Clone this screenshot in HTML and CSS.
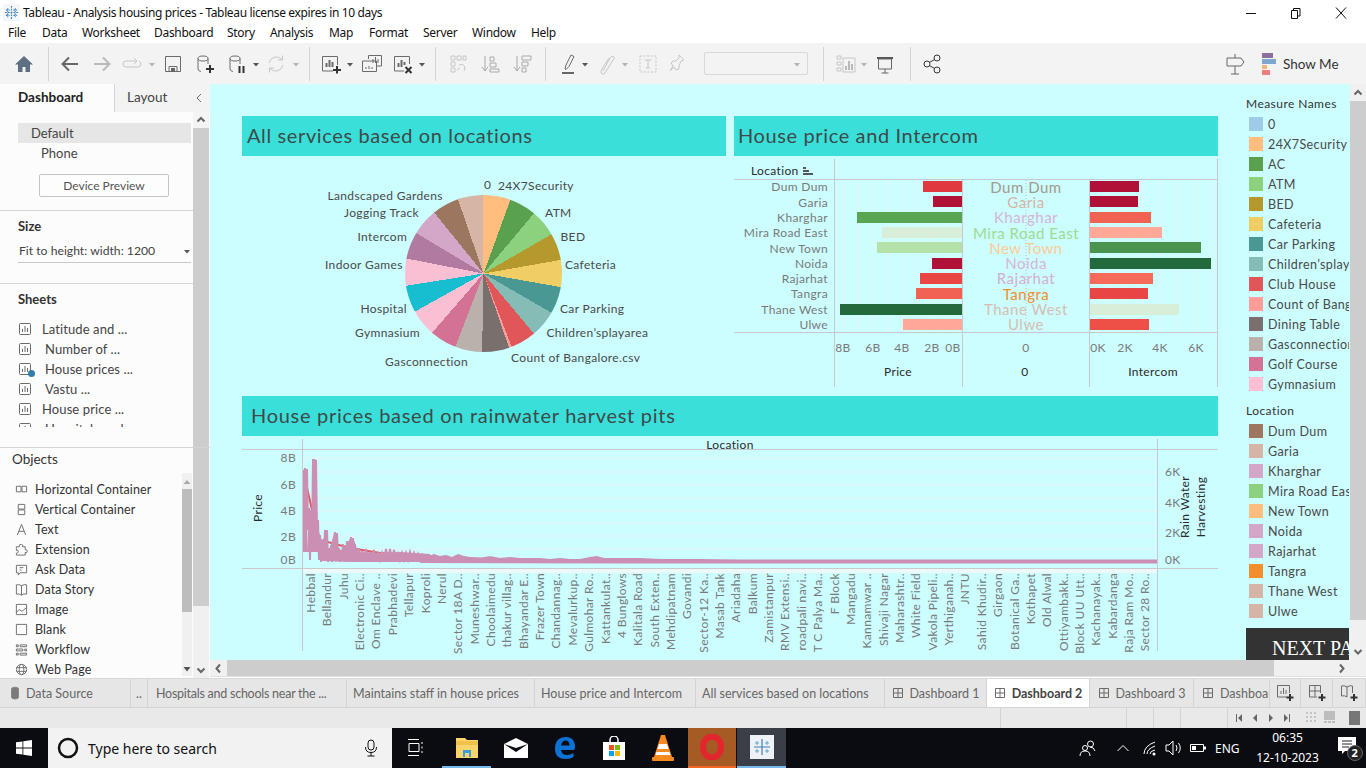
FILE: index.html
```html
<!DOCTYPE html>
<html lang="en">
<head>
<meta charset="utf-8">
<title>Tableau - Analysis housing prices</title>
<link rel="stylesheet" href="styles.css">
</head>
<body>
<svg class="defs" width="0" height="0" aria-hidden="true">
  <symbol id="sheet" viewBox="0 0 14 14"><rect x="1.5" y="1.5" width="11" height="11" rx="1" class="ln g6"/><path d="M4.5 10V7M7 10V4M9.5 10V6" class="ln g6"/></symbol>
  <symbol id="dash" viewBox="0 0 12 12"><path d="M1.5 1.5h9v9h-9zM6 1.5v9M1.5 6h9" class="ln g6"/></symbol>
  <symbol id="caret" viewBox="0 0 8 8"><path d="M1 3h6L4 6.5z" class="fl"/></symbol>
</svg>

<header class="titlebar">
  <svg class="logo" viewBox="0 0 18 18"><rect width="18" height="18" fill="#f4f7fa"/><path d="M9 2v14M2 9h14M5 4.5v4M3 6.500h4M13 4.500v4M11 6.500h4M5 10v4M3 12h4M13 10v4M11 12h4" class="logo-l"/></svg>
  <span class="title">Tableau - Analysis housing prices - Tableau license expires in 10 days</span>
  <div class="winctl">
    <svg width="12" height="12" viewBox="0 0 12 12"><path d="M1 6.500h10" class="ln k"/></svg>
    <svg width="12" height="12" viewBox="0 0 12 12"><path d="M1.500 3.500h6v8h-6zM3.500 3.500v-2h6.500v7.500h-2.500" class="ln k"/></svg>
    <svg width="12" height="12" viewBox="0 0 12 12"><path d="M1 .5l10 11M11 .5l-10 11" class="ln k"/></svg>
  </div>
</header>

<nav class="menubar">
  <span>File</span><span>Data</span><span>Worksheet</span><span>Dashboard</span><span>Story</span><span>Analysis</span><span>Map</span><span>Format</span><span>Server</span><span>Window</span><span>Help</span>
</nav>

<div class="toolbar">
  <svg class="ti m12" viewBox="0 0 24 24"><path d="M12 4L3 12.500h3V20h4.500v-5h3v5H18v-7.500h3z" fill="#5d6f80"/></svg>
  <i class="sep m12"></i>
  <svg class="ti m9" viewBox="0 0 24 24"><path d="M20 12H5M11 5.500L4.500 12l6.500 6.500" class="ln2 g5"/></svg>
  <svg class="ti m8" viewBox="0 0 24 24"><path d="M4 12h15M13 5.500l6.500 6.500-6.500 6.500" class="ln2 gb"/></svg>
  <svg class="ti m6" viewBox="0 0 24 24"><path d="M16 9H6a3 3 0 0 0 0 6h12a3 3 0 0 0 1-5.800M14 6l3 3-3 3" class="ln gc"/></svg>
  <svg class="tc m4 off" viewBox="0 0 8 8"><use href="#caret"/></svg>
  <svg class="ti m5" viewBox="0 0 24 24"><path d="M4.500 4.500h15v15h-15zM8 19.500v-5h8v5" class="ln g6"/><rect x="10" y="16" width="4" height="3.500" fill="#666"/></svg>
  <svg class="ti m8" viewBox="0 0 24 24"><ellipse cx="10" cy="6.500" rx="5" ry="2.500" class="ln g6"/><path d="M5 6.500V17q0 2 3 2.500M15 6.500V12" class="ln g6"/><path d="M17 13v8M13 17h8" class="ln2 k3"/></svg>
  <svg class="ti m8" viewBox="0 0 24 24"><ellipse cx="10" cy="6.500" rx="5" ry="2.500" class="ln g6"/><path d="M5 6.500V17q0 2 3 2.500M15 6.500V12" class="ln g6"/><path d="M14.500 14v7M18.500 14v7" class="ln2 k3"/></svg>
  <svg class="tc m3" viewBox="0 0 8 8"><use href="#caret"/></svg>
  <svg class="ti m4" viewBox="0 0 24 24"><path d="M5 11a7.500 7.500 0 0 1 13-3.500M19 13a7.500 7.500 0 0 1-13 3.500M18.500 3.500v4.500h-4.500M5.500 20.500V16h4.500" class="ln gc"/></svg>
  <svg class="tc m4 off" viewBox="0 0 8 8"><use href="#caret"/></svg>
  <i class="sep m9"></i>
  <svg class="ti m9" viewBox="0 0 24 24"><path d="M14 19H3.500V4.500h15V13" class="ln g6"/><path d="M7.500 15v-4M10.500 15V8M13.500 15v-5" class="ln2 g6"/><path d="M18 14v7.500M14 18h8" class="ln2 k3"/></svg>
  <svg class="tc m3" viewBox="0 0 8 8"><use href="#caret"/></svg>
  <svg class="ti m6" viewBox="0 0 24 24"><path d="M8.500 7V3.500h13V14H17M2.500 9h14v10.500h-14z" class="ln g6"/><path d="M13 11V7M15.500 11V5M18 11V7M6 17v-2M9 17v-3M12 17v-2" class="ln g6"/></svg>
  <svg class="ti m7" viewBox="0 0 24 24"><path d="M13 19H3.500V4.500h15V12" class="ln g6"/><path d="M7.500 15v-4M10.500 15V8M13.500 13v-3" class="ln2 g6"/><path d="M14.500 15l6 6M20.500 15l-6 6" class="ln2 k3"/></svg>
  <svg class="tc m3" viewBox="0 0 8 8"><use href="#caret"/></svg>
  <i class="sep m9"></i>
  <svg class="ti m10" viewBox="0 0 24 24"><path d="M5 4h4v4H5zM11 4h4v4h-4zM17 4h3v4h-3zM5 10h4v4H5zM5 16h4v4H5zM13 13q5-2 6 3l-1 3M11 18l3-2" class="ln gc"/></svg>
  <svg class="ti m8" viewBox="0 0 24 24"><path d="M7 4v15M4 15l3 4 3-4" class="ln g9"/><path d="M12 5h4v4h-4zM12 11h6v4h-6zM12 17h9v3h-9z" class="ln g9"/></svg>
  <svg class="ti m8" viewBox="0 0 24 24"><path d="M7 4v15M4 15l3 4 3-4" class="ln g9"/><path d="M12 4h9v4h-9zM12 10h6v4h-6zM12 16h4v4h-4z" class="ln g9"/></svg>
  <i class="sep m11"></i>
  <svg class="ti m10" viewBox="0 0 24 24"><path d="M9 17l1-4 5-10 3 1.500-5 10-3 3z" class="ln g6"/><path d="M6 21h12" class="ln2 g5"/></svg>
  <svg class="tc m1" viewBox="0 0 8 8"><use href="#caret"/></svg>
  <svg class="ti m5" viewBox="0 0 24 24"><path d="M9 19l7-13q2-3 3.500-1.500T19 8l-8 13q-2 2-3.500.5T8 17l7-11" class="ln gc"/></svg>
  <svg class="tc m3 off" viewBox="0 0 8 8"><use href="#caret"/></svg>
  <svg class="ti m7" viewBox="0 0 24 24"><rect x="4" y="4" width="16" height="16" class="ln gc dashed"/><path d="M8.500 8h7M12 8v8M10 16h4" class="ln gc"/></svg>
  <svg class="ti m5" viewBox="0 0 24 24"><path d="M14 3l5 5-3 1-2 5 0 3-3 1-2-3-4 4 3-5-2-3 2-2 3 0 3-3z" class="ln gc"/></svg>
  <div class="combo m15"><svg class="tc" viewBox="0 0 8 8"><use href="#caret" class="off"/></svg></div>
  <i class="sep m15"></i>
  <svg class="ti m10" viewBox="0 0 24 24"><path d="M9 6h12v14H9zM3 4h4v3H3zM3 10h4v3H3zM3 16h4v3H3z" class="ln gc"/><path d="M12 18v-4M15 18V9M18 18v-6" class="ln2 gb"/></svg>
  <svg class="tc m2 off" viewBox="0 0 8 8"><use href="#caret"/></svg>
  <svg class="ti m5" viewBox="0 0 24 24"><path d="M4 5h16v2H4z" fill="#555"/><path d="M5.500 7h13v10h-13zM12 17v4M8.500 21h7" class="ln g5"/></svg>
  <i class="sep m13"></i>
  <svg class="ti m9" viewBox="0 0 24 24"><circle cx="7" cy="12" r="3" class="ln k3"/><circle cx="17" cy="6" r="3" class="ln k3"/><circle cx="17" cy="18" r="3" class="ln k3"/><path d="M9.500 10.500l5-3M9.500 13.500l5 3" class="ln k3"/></svg>
  <svg class="ti signpost" viewBox="0 0 24 24"><path d="M4 6h14l3 4-3 4H4zM12 2v4M12 14v8M8 22h8" class="ln g5"/></svg>
  <div class="showme">
    <svg width="14" height="22" viewBox="0 0 14 22"><rect x="0" y="0" width="11" height="5" fill="#8a6f9e"/><rect x="0" y="6" width="14" height="5" fill="#7fa6cf"/><rect x="0" y="12" width="5" height="4" fill="#f3b37e"/><rect x="0" y="17" width="8" height="5" fill="#ee7d80"/></svg>
    <span>Show Me</span>
  </div>
</div>

<main class="workspace">
  <aside class="side">
    <div class="sidetabs"><span class="stab on">Dashboard</span><span class="stab">Layout</span>
      <svg class="collapse" width="8" height="10" viewBox="0 0 8 10"><path d="M6 1L2 5l4 4" class="ln g6"/></svg>
    </div>
    <div class="sidebody">
      <div class="sidecol">
        <section class="sec devices">
          <div class="dev on">Default</div>
          <div class="dev phone">Phone</div>
          <div class="btn">Device Preview</div>
        </section>
        <section class="sec size">
          <h3>Size</h3>
          <div class="select"><span>Fit to height: width: 1200</span><svg class="tc" viewBox="0 0 8 8"><use href="#caret"/></svg></div>
        </section>
        <section class="sec sheets">
          <h3>Sheets</h3>
          <ul class="sheetlist">
            <li><svg width="14" height="14"><use href="#sheet"/></svg><span>Latitude and ...</span></li>
            <li class="ind"><svg width="14" height="14"><use href="#sheet"/></svg><span>Number of ...</span></li>
            <li class="ind"><svg width="14" height="14"><use href="#sheet"/></svg><b class="tick"></b><span>House prices ...</span></li>
            <li class="ind"><svg width="14" height="14"><use href="#sheet"/></svg><span>Vastu ...</span></li>
            <li><svg width="14" height="14"><use href="#sheet"/></svg><span>House price ...</span></li>
            <li class="ind"><svg width="14" height="14"><use href="#sheet"/></svg><span>Hospitals and ...</span></li>
          </ul>
        </section>
      </div>
      <div class="vscroll small"><svg width="16" height="16" viewBox="0 0 16 16"><path d="M4.500 9.500L8 6l3.500 3.500" class="ln2 g5"/></svg><div class="thumb"></div></div>
    </div>
    <section class="objects">
      <h3>Objects</h3>
      <div class="objwrap">
        <ul class="objlist">
          <li><svg viewBox="0 0 14 14"><path d="M1.500 3.500h5v6h-5zM7.500 3.500h5v6h-5z" class="ln g6"/></svg>Horizontal Container</li>
          <li><svg viewBox="0 0 14 14"><path d="M3.500 1.500h7v5h-7zM3.500 7.500h7v5h-7z" class="ln g6"/></svg>Vertical Container</li>
          <li><svg viewBox="0 0 14 14"><path d="M2.500 13L7 1.500 11.500 13M4 9h6" class="ln g6"/></svg>Text</li>
          <li><svg viewBox="0 0 14 14"><path d="M1.500 6V4h3q0-3 2.500-2.500T8 4h3v3q3 0 2 2.500t-2 .5v3H1.500v-2q2 0 2-2t-2-1z" class="ln g6"/></svg>Extension</li>
          <li><svg viewBox="0 0 14 14"><path d="M1.500 2.500h11v8h-7l-2 2.500v-2.500h-2zM5 5h4M5 7.500h2" class="ln g6"/></svg>Ask Data</li>
          <li><svg viewBox="0 0 14 14"><path d="M7 3Q4 1 1.500 2v10q3-1 5.500 1 2.500-2 5.500-1V2Q10 1 7 3zM7 3v10" class="ln g6"/></svg>Data Story</li>
          <li><svg viewBox="0 0 14 14"><path d="M1.500 1.500h11v11h-11zM1.500 10l3-3 3 2 5-4" class="ln g6"/></svg>Image</li>
          <li><svg viewBox="0 0 14 14"><path d="M1.500 1.500h11v11h-11z" class="ln g6"/></svg>Blank</li>
          <li><svg viewBox="0 0 14 14"><path d="M1.500 2h2v2h-2zM5.500 2h7v2h-7zM1.500 6.500h7v2h-7zM10.500 6.500h2v2h-2zM1.500 11h2v2h-2zM5.500 11h7v2h-7z" class="ln g6"/></svg>Workflow</li>
          <li><svg viewBox="0 0 14 14"><circle cx="7" cy="7" r="5.500" class="ln g6"/><ellipse cx="7" cy="7" rx="2.500" ry="5.500" class="ln g6"/><path d="M1.500 5h11M1.500 9h11" class="ln g6"/></svg>Web Page</li>
        </ul>
        <div class="vscroll tiny"><svg width="10" height="16" viewBox="0 0 10 16"><path d="M1.500 11l3.500-4 3.500 4z" fill="#aaa"/></svg><div class="thumb"></div><svg class="down" width="10" height="12" viewBox="0 0 10 12"><path d="M1.500 3h7L5 7.500z" fill="#555"/></svg></div>
      </div>
      <svg class="objdown" width="16" height="16" viewBox="0 0 16 16"><path d="M4.500 6.500L8 10l3.500-3.500" class="ln2 g5"/></svg>
    </section>
  </aside>

  <div class="viewport">
    <div class="canvasrow">
      <div class="canvas">
        <div class="dashboard">
          <div class="toprow">
            <section class="panel">
              <h2 class="band">All services based on locations</h2>
              <div class="chart">
                <div class="pie"></div>
                <svg class="overlay" width="484" height="240" viewBox="242 156 484 240">
                  <text x="484" y="189" class="t12 d">0</text>
                  <text x="498" y="190" class="t12 d">24X7Security</text>
                  <text x="327.500" y="200" class="t12 d">Landscaped Gardens</text>
                  <text x="344" y="217" class="t12 d">Jogging Track</text>
                  <text x="545" y="217" class="t12 d">ATM</text>
                  <text x="560.500" y="241" class="t12 d">BED</text>
                  <text x="357.500" y="241" class="t12 d">Intercom</text>
                  <text x="325" y="269" class="t12 d">Indoor Games</text>
                  <text x="565" y="269" class="t12 d">Cafeteria</text>
                  <text x="560" y="313" class="t12 d">Car Parking</text>
                  <text x="360.500" y="313" class="t12 d">Hospital</text>
                  <text x="355" y="337" class="t12 d">Gymnasium</text>
                  <text x="546.500" y="337" class="t12 d">Children’splayarea</text>
                  <text x="511" y="362" class="t12 d">Count of Bangalore.csv</text>
                  <text x="385" y="366" class="t12 d">Gasconnection</text>
                </svg>
              </div>
            </section>
            <section class="panel">
              <h2 class="band second-band">House price and Intercom</h2>
              <div class="chart">
                <svg class="overlay" width="484" height="240" viewBox="734 156 484 240">
                  <path d="M844 180v152M858.700 180v152M873.300 180v152M888 180v152M902.700 180v152M917.300 180v152M932 180v152M946.700 180v152M1107 180v152M1124.700 180v152M1142.400 180v152M1160 180v152M1178 180v152M1196 180v152M1213 180v152" class="grid"/>
                  <path d="M1026 180v152" class="dots"/>
                  <rect x="923" y="181" width="39" height="11" class="b1"/><rect x="933" y="196" width="29" height="11" class="b2"/><rect x="857" y="212" width="105" height="11" class="b3"/><rect x="882" y="227" width="80" height="11" class="b4"/><rect x="877" y="242" width="85" height="11" class="b5"/><rect x="932" y="258" width="30" height="11" class="b2"/><rect x="920" y="273" width="42" height="11" class="b7"/><rect x="916" y="288" width="46" height="11" class="b8"/><rect x="840" y="304" width="122" height="11" class="b9"/><rect x="903" y="319" width="59" height="11" class="b10"/>
                  <rect x="1090" y="181" width="49" height="11" class="b2"/><rect x="1090" y="196" width="48" height="11" class="b2"/><rect x="1090" y="212" width="61" height="11" class="b8"/><rect x="1090" y="227" width="72" height="11" class="b10"/><rect x="1090" y="242" width="111" height="11" class="b11"/><rect x="1090" y="258" width="121" height="11" class="b9"/><rect x="1090" y="273" width="63" height="11" class="b12"/><rect x="1090" y="288" width="58" height="11" class="b7"/><rect x="1090" y="304" width="89" height="11" class="b4"/><rect x="1090" y="319" width="59" height="11" class="b13"/>
                  <path d="M834.500 159v228M962.500 180v207M1089.500 180v207M1217.500 159v228M734 179.500h484M734 332.500h484" class="axis"/>
                  <text x="751" y="175" class="t12 k2">Location</text>
                  <path d="M803 167h3v2h-3zM803 170h6v2h-6zM803 173h10v2h-10z" class="fl"/>
                  <g class="t12 g7 end">
                    <text x="828" y="191">Dum Dum</text><text x="828" y="207">Garia</text><text x="828" y="222">Kharghar</text><text x="828" y="237">Mira Road East</text><text x="828" y="253">New Town</text><text x="828" y="268">Noida</text><text x="828" y="283">Rajarhat</text><text x="828" y="298">Tangra</text><text x="828" y="314">Thane West</text><text x="828" y="329">Ulwe</text>
                  </g>
                  <g class="t15 mid">
                    <text x="1026" y="193" class="n1">Dum Dum</text><text x="1026" y="208" class="n2">Garia</text><text x="1026" y="223" class="n3">Kharghar</text><text x="1026" y="239" class="n4">Mira Road East</text><text x="1026" y="254" class="n5">New Town</text><text x="1026" y="269" class="n3">Noida</text><text x="1026" y="284" class="n6">Rajarhat</text><text x="1026" y="300" class="n7">Tangra</text><text x="1026" y="315" class="n8">Thane West</text><text x="1026" y="330" class="n8">Ulwe</text>
                  </g>
                  <g class="t12 g7 mid">
                    <text x="843" y="352">8B</text><text x="873" y="352">6B</text><text x="902" y="352">4B</text><text x="932" y="352">2B</text><text x="953" y="352">0B</text><text x="1026" y="352">0</text><text x="1098" y="352">0K</text><text x="1125" y="352">2K</text><text x="1160" y="352">4K</text><text x="1196" y="352">6K</text>
                  </g>
                  <g class="t12 k2 mid">
                    <text x="898" y="376">Price</text><text x="1025" y="376">0</text><text x="1153" y="376">Intercom</text>
                  </g>
                </svg>
              </div>
            </section>
          </div>
          <section class="panel wide">
            <h2 class="band">House prices based on rainwater harvest pits</h2>
            <div class="chart low">
              <svg class="overlay" width="976" height="224" viewBox="242 436 976 224">
                <rect x="302" y="569" width="855" height="4" class="strip"/>
                <path d="M303 458h854M303 472h854M303 485h854M303 498h854M303 511h854M303 523h854M303 536h854M303 549h854" class="grid"/>
                <path d="M303 470L312 510 320 540 350 548 380 553 450 558 573 560.500 720 561.500" class="trend"/>
                <path d="M303 552L303 480 306 470 307.500 550 309 505 311 550 313 459 315.500 459 317 520 319 545 326 535 328 556 334 533 337 534 339 552 346 545 351 537 354 540 358 552 380 553 400 552 430 554 430 562 350 562 322 561 318 552 303 552z" class="band-area"/>
                <path d="M303.500 552V470L304.500 545 305 468 306 552 307 469 308 530 309 508 310 560 311 510 312 548 313 459 313.500 545 314 459 315 545 316 460 317 530 318 520 319 560 320 535 321 562 322 540 323 560 324 555 325 530 326 560 327 530 328 562 329 548 330 558 331 545 332 562 333 548 334 561 335 532 336 560 337 533 338 561 339 548 340 562 341 550 342 560 343 544 344 561 345 548 346 562 347 541 348 561 349 546 350 561 351 537 352 560 353 538 354 561 355 544 356 561 357 549 358 562 359 548 360 561 362 551 364 561 366 549 368 561 370 552 372 561 374 550 376 561 378 552 380 560 382 553 384 560 386 549 388 560 390 549 392 560 394 550 396 560 398 552 400 560 402 553 404 560 406 553 408 560 410 552 412 559 414 553 416 559 418 554 420 560" class="zig"/>
                <path d="M420 560L422 553 428 556 434 554 440 556 446 555 452 557 458 554 464 556 470 557 480 558 490 556 500 558 510 557 520 558 530 558 540 558 550 559 560 558 570 559 580 559 590 557 597 556 604 558 640 558 660 559 700 559 740 559.500 1157 559.500V563.500H640L420 563z" class="band-area"/>
                <path d="M302.500 439v212M1157.500 439v212M242 449.500h976M242 568.500h976" class="axis"/>
                <text x="730" y="449" class="t12 k2 mid">Location</text>
                <g class="t12 g7 end">
                  <text x="296" y="462">8B</text><text x="296" y="489">6B</text><text x="296" y="515">4B</text><text x="296" y="541">2B</text><text x="296" y="564">0B</text>
                </g>
                <g class="t12 g7">
                  <text x="1165" y="476">6K</text><text x="1165" y="507">4K</text><text x="1165" y="537">2K</text><text x="1165" y="564">0K</text>
                </g>
                <g class="t12 k2 mid">
                  <text transform="translate(262 508) rotate(-90)">Price</text>
                  <text transform="translate(1189 507) rotate(-90)">Rain Water</text>
                  <text transform="translate(1205 507) rotate(-90)">Harvesting</text>
                </g>
                <g class="t12 g7 end">
                  <text transform="translate(315 573) rotate(-90)">Hebbal</text>
                  <text transform="translate(331.400 573) rotate(-90)">Bellandur</text>
                  <text transform="translate(347.700 573) rotate(-90)">Juhu</text>
                  <text transform="translate(364.100 573) rotate(-90)">Electronic Ci..</text>
                  <text transform="translate(380.400 573) rotate(-90)">Om Enclave ..</text>
                  <text transform="translate(396.800 573) rotate(-90)">Prabhadevi</text>
                  <text transform="translate(413.200 573) rotate(-90)">Tellapur</text>
                  <text transform="translate(429.500 573) rotate(-90)">Koproli</text>
                  <text transform="translate(445.900 573) rotate(-90)">Nerul</text>
                  <text transform="translate(462.200 573) rotate(-90)">Sector 18A D..</text>
                  <text transform="translate(478.600 573) rotate(-90)">Muneshwar..</text>
                  <text transform="translate(495 573) rotate(-90)">Choolaimedu</text>
                  <text transform="translate(511.300 573) rotate(-90)">thakur villag..</text>
                  <text transform="translate(527.700 573) rotate(-90)">Bhayandar E..</text>
                  <text transform="translate(544 573) rotate(-90)">Frazer Town</text>
                  <text transform="translate(560.400 573) rotate(-90)">Chandannag..</text>
                  <text transform="translate(576.800 573) rotate(-90)">Mevalurkup..</text>
                  <text transform="translate(593.100 573) rotate(-90)">Gulmohar Ro..</text>
                  <text transform="translate(609.500 573) rotate(-90)">Kattankulat..</text>
                  <text transform="translate(625.800 573) rotate(-90)">4 Bunglows</text>
                  <text transform="translate(642.200 573) rotate(-90)">Kalitala Road</text>
                  <text transform="translate(658.600 573) rotate(-90)">South Exten..</text>
                  <text transform="translate(674.900 573) rotate(-90)">Mehdipatnam</text>
                  <text transform="translate(691.300 573) rotate(-90)">Govandi</text>
                  <text transform="translate(707.600 573) rotate(-90)">Sector-12 Ka..</text>
                  <text transform="translate(724 573) rotate(-90)">Masab Tank</text>
                  <text transform="translate(740.400 573) rotate(-90)">Ariadaha</text>
                  <text transform="translate(756.700 573) rotate(-90)">Balkum</text>
                  <text transform="translate(773.100 573) rotate(-90)">Zamistanpur</text>
                  <text transform="translate(789.400 573) rotate(-90)">RMV Extensi..</text>
                  <text transform="translate(805.800 573) rotate(-90)">roadpali navi..</text>
                  <text transform="translate(822.200 573) rotate(-90)">T C Palya Ma..</text>
                  <text transform="translate(838.500 573) rotate(-90)">F Block</text>
                  <text transform="translate(854.900 573) rotate(-90)">Mangadu</text>
                  <text transform="translate(871.200 573) rotate(-90)">Kannamwar ..</text>
                  <text transform="translate(887.600 573) rotate(-90)">Shivaji Nagar</text>
                  <text transform="translate(904 573) rotate(-90)">Maharashtr..</text>
                  <text transform="translate(920.300 573) rotate(-90)">White Field</text>
                  <text transform="translate(936.700 573) rotate(-90)">Vakola Pipeli..</text>
                  <text transform="translate(953 573) rotate(-90)">Yerthiganah..</text>
                  <text transform="translate(969.400 573) rotate(-90)">JNTU</text>
                  <text transform="translate(985.800 573) rotate(-90)">Sahid Khudir..</text>
                  <text transform="translate(1002.100 573) rotate(-90)">Girgaon</text>
                  <text transform="translate(1018.500 573) rotate(-90)">Botanical Ga..</text>
                  <text transform="translate(1034.800 573) rotate(-90)">Kothapet</text>
                  <text transform="translate(1051.200 573) rotate(-90)">Old Alwal</text>
                  <text transform="translate(1067.600 573) rotate(-90)">Ottiyambakk..</text>
                  <text transform="translate(1083.900 573) rotate(-90)">Block UU Utt..</text>
                  <text transform="translate(1100.300 573) rotate(-90)">Kachanayak..</text>
                  <text transform="translate(1116.600 573) rotate(-90)">Kabardanga</text>
                  <text transform="translate(1133 573) rotate(-90)">Raja Ram Mo..</text>
                  <text transform="translate(1149.400 573) rotate(-90)">Sector 28 Ro..</text>
                </g>
              </svg>
            </div>
          </section>
        </div>
        <aside class="legends">
          <h4>Measure Names</h4>
          <ul class="legend">
            <li><i class="c-0"></i>0</li><li><i class="c-1"></i>24X7Security</li><li><i class="c-2"></i>AC</li><li><i class="c-3"></i>ATM</li><li><i class="c-4"></i>BED</li><li><i class="c-5"></i>Cafeteria</li><li><i class="c-6"></i>Car Parking</li><li><i class="c-7"></i>Children’splayarea</li><li><i class="c-8"></i>Club House</li><li><i class="c-9"></i>Count of Bangalore.csv</li><li><i class="c-10"></i>Dining Table</li><li><i class="c-11"></i>Gasconnection</li><li><i class="c-12"></i>Golf Course</li><li><i class="c-13"></i>Gymnasium</li>
          </ul>
          <h4 class="second">Location</h4>
          <ul class="legend">
            <li><i class="c-17"></i>Dum Dum</li><li><i class="c-18"></i>Garia</li><li><i class="c-16"></i>Kharghar</li><li><i class="c-3"></i>Mira Road East</li><li><i class="c-1"></i>New Town</li><li><i class="c-16"></i>Noida</li><li><i class="c-16"></i>Rajarhat</li><li><i class="c-19"></i>Tangra</li><li><i class="c-18"></i>Thane West</li><li><i class="c-18"></i>Ulwe</li>
          </ul>
          <div class="nextpage">NEXT PAGE</div>
        </aside>
      </div>
      <div class="vscroll main">
        <svg width="16" height="17" viewBox="0 0 16 17"><path d="M4.500 10.500L8 7l3.500 3.500" class="ln2 g5"/></svg>
        <div class="thumb"></div>
        <svg class="down" width="16" height="17" viewBox="0 0 16 17"><path d="M4.500 7L8 10.500 11.500 7" class="ln2 g5"/></svg>
      </div>
    </div>
    <div class="hscroll">
      <svg width="17" height="17" viewBox="0 0 17 17"><path d="M10 4.500L6.500 8.500 10 12.500" class="ln2 g5"/></svg>
      <div class="hthumb"></div>
      <svg class="right" width="17" height="17" viewBox="0 0 17 17"><path d="M7 4.500L10.500 8.500 7 12.500" class="ln2 g5"/></svg>
    </div>
  </div>
</main>

<div class="tabs">
  <div class="tab first"><svg width="10" height="14" viewBox="0 0 10 14"><ellipse cx="5" cy="3" rx="3.500" ry="1.800" class="ln g7"/><path d="M1.500 3v8q0 2 3.500 2t3.500-2V3" class="ln g7"/></svg>Data Source</div>
  <div class="tab">..</div>
  <div class="tab txt narrow">Hospitals and schools near the ...</div>
  <div class="tab txt">Maintains staff in house prices</div>
  <div class="tab txt">House price and Intercom</div>
  <div class="tab txt">All services based on locations</div>
  <div class="tab"><svg width="12" height="12"><use href="#dash"/></svg>Dashboard 1</div>
  <div class="tab active"><svg width="12" height="12"><use href="#dash"/></svg>Dashboard 2</div>
  <div class="tab"><svg width="12" height="12"><use href="#dash"/></svg>Dashboard 3</div>
  <div class="tab clip"><svg width="12" height="12"><use href="#dash"/></svg><span>Dashboard 4</span></div>
  <div class="tab add"><svg width="18" height="18" viewBox="0 0 18 18"><path d="M11 13H1.500V1.500h12V9" class="ln g6"/><path d="M5 10V7M7.500 10V4M10 10V6" class="ln g6"/><path d="M14 10v7M10.500 13.500h7" class="ln2 k3"/></svg></div>
  <div class="tab add"><svg width="18" height="18" viewBox="0 0 18 18"><path d="M9 13H1.500V1.500h11V9M7 1.500v11M1.500 7h11" class="ln g6"/><path d="M14 10v7M10.500 13.500h7" class="ln2 k3"/></svg></div>
  <div class="tab add"><svg width="18" height="18" viewBox="0 0 18 18"><path d="M7 3Q4 1 1.500 2v10q3-1 5.500 1M7 3q3-2 5.500-1v7M7 3v10" class="ln g6"/><path d="M14 10v7M10.500 13.500h7" class="ln2 k3"/></svg></div>
</div>

<div class="statusbar">
  <i class="v v1"></i><i class="v v2"></i><i class="v v3"></i><i class="v v4"></i><i class="v v5"></i>
  <div class="pager">
    <svg width="8" height="10" viewBox="0 0 8 10"><path d="M1 1v8h1V1zM7 1v8L3 5z" class="fl g"/></svg>
    <svg width="8" height="10" viewBox="0 0 8 10"><path d="M6 1v8L2 5z" class="fl g"/></svg>
    <svg width="8" height="10" viewBox="0 0 8 10"><path d="M2 1v8l4-4z" class="fl g"/></svg>
    <svg width="8" height="10" viewBox="0 0 8 10"><path d="M7 1v8H6V1zM1 1v8l4-4z" class="fl g"/></svg>
  </div>
  <div class="views">
    <svg class="vw1" width="12" height="14" viewBox="0 0 12 14"><path d="M1 1h2v2H1zM5 1h2v2H5zM9 1h2v2H9zM1 5h2v2H1zM5 5h2v2H5zM9 5h2v2H9zM1 9h2v2H1zM5 9h2v2H5zM9 9h2v2H9z" fill="#c4c4c4"/></svg>
    <svg class="vw2" width="12" height="14" viewBox="0 0 12 14"><path d="M0 0h11v9H0zM0 10h3v2H0zM4 10h3v2H4zM8 10h3v2H8z" fill="#bdbdbd"/></svg>
    <svg class="vw3" width="11" height="14" viewBox="0 0 11 14"><rect width="11" height="14" fill="#777"/></svg>
  </div>
</div>

<footer class="taskbar">
  <svg class="win" width="16" height="16" viewBox="0 0 16 16"><path d="M0 2.300l6.500-.9v6.200H0zM7.300 1.300L16 0v7.600H7.300zM0 8.400h6.500v6.200L0 13.700zM7.300 8.400H16V16l-8.700-1.200z" fill="#fff"/></svg>
  <div class="search">
    <svg width="24" height="24" viewBox="0 0 24 24"><circle cx="12" cy="12" r="9" fill="none" stroke="#111" stroke-width="2.500"/></svg>
    <span>Type here to search</span>
    <svg class="mic" width="14" height="18" viewBox="0 0 14 18"><rect x="4" y="1" width="6" height="10" rx="3" class="ln k"/><path d="M1.500 8q0 5.500 5.500 5.500T12.500 8M7 13.500V17M3.500 17h7" class="ln k"/></svg>
  </div>
  <svg class="ta tv" width="16" height="18" viewBox="0 0 16 18"><path d="M0 .5h11M1 4.500h10v8H1zM0 16.500h11M14 3v2M14 7.500v2M14 12v2" stroke="#fff" fill="none"/></svg>
  <div class="app on"><svg width="22" height="22" viewBox="0 0 22 22"><path d="M0 2h9l2 2h11v18H0z" fill="#fbd56b"/><path d="M0 5h22v4H0z" fill="#f2c14a"/><path d="M7 21v-7h8v7h-2v-4H9v4z" fill="#3aa0dc"/></svg></div>
  <div class="app"><svg width="24" height="20" viewBox="0 0 24 20"><path d="M0 6L12 0l12 6v14H0z" fill="#fff"/><path d="M0 6l12 8 12-8-12 4z" fill="#0a0d12"/></svg></div>
  <div class="app"><svg width="20" height="22" viewBox="0 0 20 22"><path d="M19 13H6q.5 5 6 5 4 0 6.500-2v4q-3 2-7.500 2Q0 22 0 12 0 0 11 0c6 0 9 4 9 10v1zM14.500 8.500C14.500 5 13 3.500 10.500 3.500 8 3.500 6.500 5.500 6 8.500z" fill="#0c73d6"/></svg></div>
  <div class="app"><svg width="24" height="24" viewBox="0 0 24 24"><path d="M1 6h22v18H1z" fill="#fff"/><path d="M8 7V4a4 4 0 0 1 8 0v3" fill="none" stroke="#fff" stroke-width="1.500"/><rect x="7" y="9" width="5" height="5" fill="#f25022"/><rect x="13" y="9" width="5" height="5" fill="#7fba00"/><rect x="7" y="15" width="5" height="5" fill="#00a4ef"/><rect x="13" y="15" width="5" height="5" fill="#ffb900"/></svg></div>
  <div class="app"><svg width="22" height="26" viewBox="0 0 22 26"><path d="M9 0h4l7 22H2z" fill="#f68a1e"/><path d="M7 9h8l1.500 5h-11zM4.500 17h13l1 3h-15z" fill="#fff"/><rect x="0" y="22" width="22" height="4" rx="1" fill="#f68a1e"/></svg></div>
  <div class="app opera"><svg width="24" height="26" viewBox="0 0 24 26"><ellipse cx="12" cy="13" rx="9" ry="10.500" fill="none" stroke="#e3262e" stroke-width="6"/></svg></div>
  <div class="app tabl"><svg width="24" height="24" viewBox="0 0 24 24"><rect width="24" height="24" fill="#eef2f6"/><path d="M12 4v16M4 12h16" stroke="#3f7fb5" stroke-width="1.200"/><path d="M7 6v4M5 8h4M17 6v4M15 8h4M7 14v4M5 16h4M17 14v4M15 16h4" stroke="#6aa3cc" fill="none"/></svg></div>
  <div class="tray">
    <svg class="pp" width="20" height="20" viewBox="0 0 20 20"><circle cx="12.500" cy="6" r="3" class="ln w"/><circle cx="7" cy="10" r="2.500" class="ln w"/><path d="M2 18q0-5 5-5t5 5M12 9q4 0 5 4" class="ln w"/></svg>
    <svg class="up" width="14" height="10" viewBox="0 0 14 10"><path d="M1.500 8L7 2.500 12.500 8" class="ln w"/></svg>
    <svg class="wifi" width="16" height="16" viewBox="0 0 16 16"><path d="M3 14Q3 6 14 2M6 14q0-5 8-8M9 14q0-3 5-4" class="ln w"/><circle cx="13" cy="14" r="1.500" fill="#fff"/></svg>
    <svg class="vol" width="18" height="16" viewBox="0 0 18 16"><path d="M1 5h3l4-4v14l-4-4H1zM11 5q2 3 0 6M13.500 3q3.500 5 0 10" class="ln w"/></svg>
    <svg class="bat" width="16" height="10" viewBox="0 0 16 10"><path d="M.5 1.500h13v7H.5z" class="ln w"/><rect x="2" y="3" width="4" height="4" fill="#fff"/><rect x="14" y="3.500" width="2" height="3" fill="#fff"/></svg>
    <span class="eng">ENG</span>
    <div class="clock"><span>06:35</span><span>12-10-2023</span></div>
    <div class="notif"><svg width="20" height="18" viewBox="0 0 20 18"><path d="M0 0h18v14H7l-3 3v-3H0z" fill="#fff"/><path d="M4 4h10M4 7h10M4 10h7" stroke="#222"/></svg><b>2</b></div>
  </div>
</footer>
</body>
</html>
```

FILE: styles.css
```css
* { box-sizing: border-box; }
html, body { margin: 0; padding: 0; }
body { width: 1366px; height: 768px; overflow: hidden; background: #fff; font-family: "Lato", "Noto Sans", sans-serif; color: #333; display: flex; flex-direction: column; }
ul { list-style: none; margin: 0; padding: 0; }
h2, h3, h4 { margin: 0; font-weight: 400; }
.defs { position: absolute; }

.ln { fill: none; stroke-width: 1; }
.ln2 { fill: none; stroke-width: 2; }
.k { stroke: #111; } .k3 { stroke: #333; } .w { stroke: #fff; }
.g5 { stroke: #666; } .g6 { stroke: #6b6b6b; } .g7 { stroke: #888; } .g9 { stroke: #a9a9a9; } .gb { stroke: #b9b9b9; } .gc { stroke: #c6c6c6; }
.dashed { stroke-dasharray: 2 1.500; }
.fl { fill: #555; }
.fl.g { fill: #666; }
.off { opacity: .4; }
text.g7, g.g7 { stroke: none; }

.titlebar { height: 25px; display: flex; align-items: center; padding-left: 3px; flex: none; }
.logo { width: 17px; height: 17px; }
.logo-l { stroke: #3f83b5; fill: none; stroke-width: 1.200; stroke-dasharray: 2 1; }
.title { margin-left: 3px; font: 12px/16px "Noto Sans", sans-serif; letter-spacing: -.36px; color: #111; }
.winctl { margin-left: auto; display: flex; gap: 33px; padding-right: 19px; }

.menubar { height: 18px; flex: none; display: grid; grid-template-columns: 34px 40px 72px 73px 43px 59px 40px 54px 49px 59px auto; padding-left: 8px; font: 12px/16px "Noto Sans", sans-serif; letter-spacing: -.3px; color: #111; }

.toolbar { height: 41px; flex: none; display: flex; align-items: center; background: #f3f3f3; }
.ti { width: 24px; height: 24px; flex: none; }
.tc { width: 8px; height: 8px; flex: none; }
.sep { width: 1px; height: 34px; background: #d4d4d4; flex: none; }
.m1 { margin-left: 1px; } .m2 { margin-left: 2px; } .m3 { margin-left: 3px; } .m4 { margin-left: 4px; } .m5 { margin-left: 5px; } .m6 { margin-left: 6px; } .m7 { margin-left: 7px; } .m8 { margin-left: 8px; } .m9 { margin-left: 9px; } .m10 { margin-left: 10px; } .m11 { margin-left: 11px; } .m12 { margin-left: 12px; } .m13 { margin-left: 13px; } .m15 { margin-left: 15px; }
.combo { width: 104px; height: 23px; border: 1px solid #d8d8d8; border-radius: 2px; display: flex; align-items: center; justify-content: flex-end; padding-right: 6px; }
.signpost { margin-left: 279px; }
.showme { margin-left: 15px; display: flex; align-items: center; gap: 7px; font-size: 13.500px; color: #333; }

.workspace { height: 594px; flex: none; display: flex; }
.side { width: 210px; flex: none; display: flex; flex-direction: column; background: #fcfcfc; }
.sidetabs { height: 28px; flex: none; display: flex; background: #f3f3f3; position: relative; font-size: 13.500px; }
.stab { width: 115px; padding-top: 5px; padding-left: 12px; border-right: 1px solid #d4d4d4; color: #444; }
.stab.on { background: #fcfcfc; font-weight: 700; color: #222; width: 115px; padding-left: 18px; }
.stab + .stab { width: 95px; border-right: 0; }
.collapse { position: absolute; left: 195px; top: 9px; }
.sidebody { height: 335px; flex: none; display: flex; }
.sidecol { width: 193px; flex: none; }
.sec { border-bottom: 1px solid #d4d4d4; }
.sec h3 { font-size: 13px; font-weight: 700; color: #333; padding-left: 18px; line-height: 16px; }
.devices { height: 99px; padding-top: 11px; font-size: 13px; }
.dev { height: 20px; line-height: 20px; margin-left: 18px; margin-right: 2px; padding-left: 13px; color: #444; }
.dev.on { background: #e6e6e6; }
.dev.phone { padding-left: 23px; }
.btn { width: 130px; height: 23px; margin: 11px 0 0 39px; border: 1px solid #c4c4c4; border-radius: 2px; text-align: center; font-size: 12px; line-height: 21px; color: #555; background: #fdfdfd; }
.size { height: 73px; padding-top: 7px; }
.select { margin: 8px 2px 0 18px; height: 21px; border-bottom: 1px solid #c8c8c8; display: flex; align-items: center; justify-content: space-between; font-size: 12.200px; padding: 0 0 3px 1px; color: #444; }
.sheets { height: 163px; padding-top: 7px; border-bottom: 0; overflow: hidden; }
.sheetlist { margin: 12px 0 0 18px; height: 108px; overflow: hidden; }
.sheetlist li { height: 20px; display: flex; align-items: center; gap: 10px; font-size: 13px; letter-spacing: .1px; color: #444; position: relative; }
.sheetlist li.ind { gap: 13px; }
.tick { position: absolute; left: 10px; top: 11px; width: 7px; height: 7px; border-radius: 50%; background: #2f7fa8; }
.vscroll { display: flex; flex-direction: column; background: #f0f0f0; flex: none; }
.vscroll .thumb { background: #cdcdcd; }
.vscroll.small { width: 16px; background: #f4f4f4; }
.vscroll.small .thumb { height: 319px; }
.objects { flex: 1; border-top: 1px solid #d4d4d4; position: relative; padding-top: 3px; margin-right: 0; }
.objects::before { content: ""; position: absolute; left: 193px; top: 0; width: 16px; bottom: 0; background: linear-gradient(#cdcdcd 158px, #f0f0f0 158px); }
.objects h3 { font-size: 13.500px; font-weight: 400; color: #333; padding-left: 12px; line-height: 16px; }
.objwrap { display: flex; margin-top: 6px; width: 192px; }
.objlist { width: 182px; padding: 6px 0 0 15px; height: 203px; overflow: hidden; }
.objlist li { height: 20px; display: flex; align-items: center; gap: 7px; font-size: 12.500px; letter-spacing: .1px; color: #333; }
.objlist svg { width: 13px; height: 13px; flex: none; }
.vscroll.tiny { width: 10px; height: 203px; position: relative; }
.vscroll.tiny .thumb { height: 123px; background: #bdbdbd; }
.vscroll.tiny .down { position: absolute; bottom: 0; left: 0; }
.objdown { position: absolute; left: 193px; bottom: 0; }

.viewport { width: 1156px; flex: none; display: flex; flex-direction: column; }
.canvasrow { height: 576px; flex: none; display: flex; }
.canvas { width: 1140px; flex: none; background: #ccfdff; display: flex; overflow: hidden; padding: 32px 0 0 32px; }
.dashboard { width: 976px; flex: none; display: flex; flex-direction: column; }
.toprow { display: flex; gap: 8px; }
.panel { width: 484px; flex: none; }
.panel.wide { width: 976px; }
.band { height: 40px; background: #3bdfd9; font-size: 20px; line-height: 38px; padding-left: 5px; color: #3d4a4a; letter-spacing: .62px; }
.second-band { padding-left: 4px; }
.wide .band { padding-left: 9px; letter-spacing: .72px; }
.chart { height: 240px; position: relative; }
.chart.low { height: 224px; }
.overlay { display: block; position: absolute; left: 0; top: 0; }
.pie { position: absolute; left: 163px; top: 39px; width: 157px; height: 157px; border-radius: 50%;
  background: conic-gradient(#ffbe7d 0 20deg, #59a14f 0 40deg, #8cd17d 0 60deg, #b6992d 0 80deg, #f1ce63 0 100deg, #499894 0 120deg, #86bcb6 0 140deg, #e15759 0 159deg, #ff9d9a 0 161deg, #79706e 0 181deg, #bab0ac 0 201deg, #d37295 0 221deg, #fabfd2 0 241deg, #17becf 0 261deg, #fabfd2 0 281deg, #b07aa1 0 301deg, #d4a6c8 0 321deg, #9d7660 0 341deg, #d7b5a6 0 360deg); }
text, .t12, .t15 { font-family: "Lato", "Noto Sans", sans-serif; }
.t12 { font-size: 12px; letter-spacing: .35px; }
.t15 { font-size: 15px; letter-spacing: .5px; }
.d { fill: #4a4a4a; }
.k2 { fill: #2b2b2b; }
.g7 { fill: #7a7a7a; }
.end { text-anchor: end; }
.mid { text-anchor: middle; }
.grid { stroke: #e8f3f3; stroke-width: 1; fill: none; }
.dots { stroke: #c9b9c4; stroke-dasharray: 1 2; fill: none; }
.axis { stroke: #c9c9cd; stroke-width: 1; fill: none; }
.strip { fill: #edf8f8; }
.trend { fill: none; stroke: #e65558; stroke-width: 2; }
.zig { fill: none; stroke: #cc8fb4; stroke-width: 2; }
.band-area { fill: #cc8fb4; }
.b1 { fill: #e0393f; } .b2 { fill: #b01237; } .b3 { fill: #58a554; } .b4 { fill: #d9eed9; } .b5 { fill: #b5e2a9; } .b7 { fill: #e94545; } .b8 { fill: #f26253; } .b9 { fill: #22693c; } .b10 { fill: #ffa898; } .b11 { fill: #4a9450; } .b12 { fill: #f66a5a; } .b13 { fill: #ee5048; }
.n1 { fill: #a49a8c; } .n2 { fill: #d7b5a6; } .n3 { fill: #d9b4d8; } .n4 { fill: #a2da92; } .n5 { fill: #ffcb95; } .n6 { fill: #d8aed0; } .n7 { fill: #f28e2b; } .n8 { fill: #d7c0b0; }

.legends { width: 103px; margin-left: 28px; flex: none; height: 564px; margin-top: -20px; overflow: hidden; color: #444; }
.legends h4 { font-size: 12px; letter-spacing: .45px; line-height: 16px; color: #333; }
.legends h4.second { margin-top: 9px; }
.legend { margin: 2px 0 0 3px; }
.legend li { height: 20px; display: flex; align-items: center; gap: 5px; font-size: 12.500px; letter-spacing: .4px; white-space: nowrap; color: #4a4a4a; }
.legend i { width: 14px; height: 14px; flex: none; }
.c-0 { background: #a0cbe8; } .c-1 { background: #ffbe7d; } .c-2 { background: #59a14f; } .c-3 { background: #8cd17d; } .c-4 { background: #b6992d; } .c-5 { background: #f1ce63; } .c-6 { background: #499894; } .c-7 { background: #86bcb6; } .c-8 { background: #e15759; } .c-9 { background: #ff9d9a; } .c-10 { background: #79706e; } .c-11 { background: #bab0ac; } .c-12 { background: #d37295; } .c-13 { background: #fabfd2; } .c-16 { background: #d4a6c8; } .c-17 { background: #9d7660; } .c-18 { background: #d7b5a6; } .c-19 { background: #f28e2b; }
.nextpage { margin-top: 7px; height: 32px; background: #333; color: #fff; font: 20px/40px "Liberation Serif", serif; padding-left: 26px; white-space: nowrap; overflow: hidden; }

.vscroll.main { width: 16px; position: relative; }
.vscroll.main .thumb { height: 519px; }
.vscroll.main .down { position: absolute; left: 0; bottom: 0; }
.hscroll { height: 17px; background: #f0f0f0; display: flex; position: relative; border-bottom: 1px solid #e0e0e0; }
.hthumb { width: 1047px; background: #cdcdcd; }
.hscroll .right { position: absolute; right: 16px; top: 0; }

.tabs { height: 30px; flex: none; display: grid; grid-template-columns: 131px 17px 199px 188px 161px 189px 102px 103px 104px 76px 31px 32px 33px; background: #e6e6e6; border-top: 1px solid #d8d8d8; border-bottom: 1px solid #d4d4d4; }
.tab { border-right: 1px solid #d4d4d4; display: flex; align-items: center; justify-content: center; gap: 6px; font-size: 12.500px; color: #666; white-space: nowrap; overflow: hidden; padding: 0; }
.tab svg { flex: none; }
.tab.first { justify-content: flex-start; padding-left: 10px; }
.tab.txt { justify-content: flex-start; padding-left: 6px; }
.tab.narrow { padding-left: 8px; letter-spacing: -.25px; }
.tab.active { background: #fff; font-weight: 700; color: #444; }
.tab.clip { justify-content: flex-start; padding-left: 8px; }
.tab.clip span { flex: none; }
.tab.add { border-right: 1px solid #d4d4d4; }

.statusbar { height: 20px; flex: none; background: #e9e9e9; display: flex; align-items: center; position: relative; }
.v { position: absolute; top: 0; bottom: 0; width: 1px; background: #d4d4d4; }
.v1 { left: 1000px; } .v2 { left: 1126px; } .v3 { left: 1153px; } .v4 { left: 1180px; } .v5 { left: 1227px; }
.pager { position: absolute; left: 1235px; display: flex; gap: 8px; }
.views { position: absolute; left: 1305px; display: flex; align-items: center; }
.vw2 { margin-left: 7px; } .vw3 { margin-left: 13px; }

.taskbar { height: 40px; flex: none; background: #0a0c12; display: flex; align-items: center; position: relative; }
.win { margin-left: 16px; }
.search { margin-left: 16px; width: 344px; height: 40px; background: #f2f2f2; display: flex; align-items: center; padding-left: 8px; font: 14px "Noto Sans", sans-serif; color: #111; }
.search span { margin-left: 8px; }
.mic { margin-left: auto; margin-right: 14px; }
.ta { margin-left: 16px; }
.app { width: 49px; height: 40px; flex: none; display: flex; align-items: center; justify-content: center; }
.tv + .app { margin-left: 18px; }
.app.on { border-bottom: 2px solid #76b9ed; }
.app.opera { background: #a65a24; border-bottom: 2px solid #f26522; width: 48px; margin-left: 1px; }
.app.tabl { background: #3a3f47; border-bottom: 2px solid #76b9ed; margin-left: 1px; }
.tray { position: absolute; left: 1078px; top: 0; height: 40px; width: 288px; display: flex; align-items: center; color: #fff; font: 12px "Noto Sans", sans-serif; }
.up { margin-left: 18px; }
.wifi { margin-left: 11px; } .vol { margin-left: 8px; } .bat { margin-left: 7px; }
.eng { margin-left: 9px; }
.clock { margin-left: 12px; width: 72px; display: flex; flex-direction: column; align-items: center; line-height: 20px; }
.notif { margin-left: 14px; position: relative; }
.notif b { position: absolute; left: 9px; top: 8px; width: 16px; height: 16px; border-radius: 50%; background: #222; border: 1px solid #666; font: 700 11px/14px "Noto Sans", sans-serif; text-align: center; }
```
